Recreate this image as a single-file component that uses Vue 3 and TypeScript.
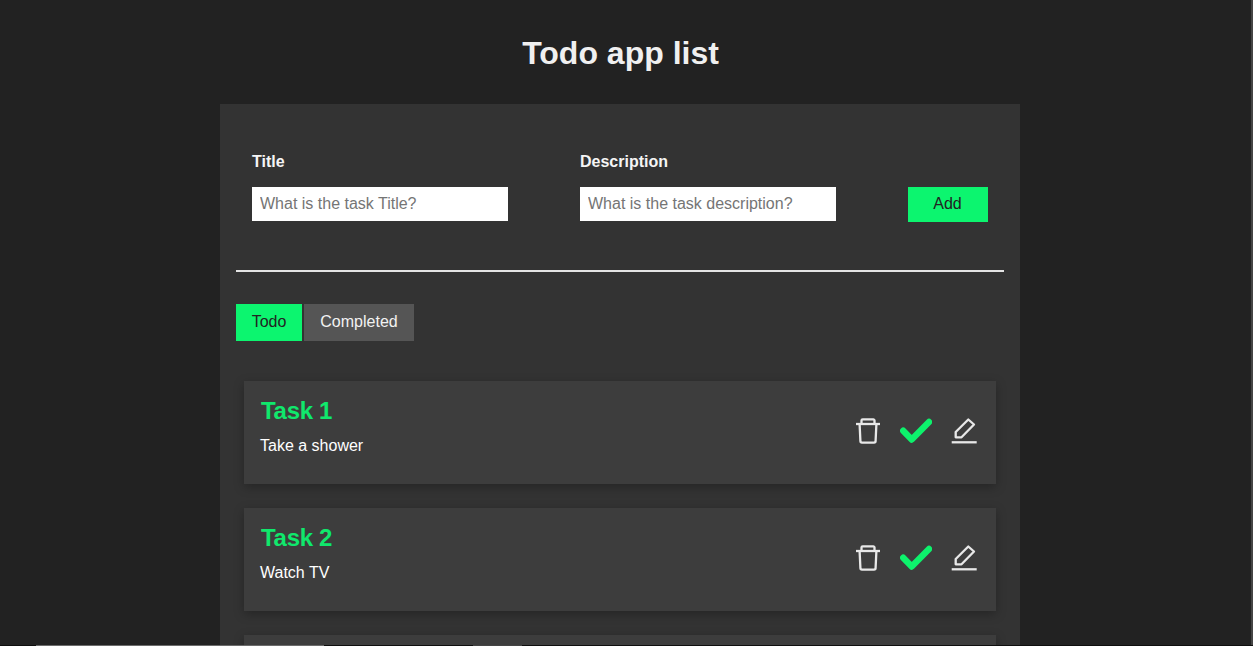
<script setup lang="ts">
interface Task {
  title: string
  description: string
}

const tasks: Task[] = [
  { title: 'Task 1', description: 'Take a shower' },
  { title: 'Task 2', description: 'Watch TV' },
]
</script>

<template>
  <div class="page">
    <header class="header">
      <h1>Todo app list</h1>
    </header>

    <main class="wrapper">
      <form class="form" @submit.prevent>
        <div class="field">
          <label for="title">Title</label>
          <input id="title" type="text" placeholder="What is the task Title?" />
        </div>
        <div class="field">
          <label for="description">Description</label>
          <input id="description" type="text" placeholder="What is the task description?" />
        </div>
        <button type="submit" class="add">Add</button>
      </form>

      <div class="tabs">
        <button type="button" class="tab active">Todo</button>
        <button type="button" class="tab">Completed</button>
      </div>

      <ul class="list">
        <li v-for="task in tasks" :key="task.title" class="card">
          <div class="text">
            <h3>{{ task.title }}</h3>
            <p>{{ task.description }}</p>
          </div>
          <div class="icons">
            <svg viewBox="0 0 32 32" fill="none" stroke="#e8e8e8" stroke-width="2.3">
              <path d="M4 9H28" />
              <path d="M9.5 9V5.6a1.2 1.2 0 0 1 1.2-1.2H21.3a1.2 1.2 0 0 1 1.2 1.2V9" />
              <path d="M7.6 9L8.4 26a1.6 1.6 0 0 0 1.6 1.6H22a1.6 1.6 0 0 0 1.6-1.6L24.4 9" />
            </svg>
            <svg viewBox="0 0 32 32" fill="none" stroke="#0df26c" stroke-width="6.4" stroke-linecap="round" stroke-linejoin="round">
              <path d="M3.2 15.7L11.7 24.5L29 7" />
            </svg>
            <svg viewBox="0 0 32 32" fill="none" stroke="#e8e8e8" stroke-width="2.3">
              <path d="M3.7 27.3H28.7" />
              <path d="M7.7 22.3V17L20.3 4.5L26 9.5L13.5 22.3Z" stroke-linejoin="round" />
            </svg>
          </div>
        </li>
        <li class="card"></li>
      </ul>
    </main>

    <div class="edge-right"></div>
    <div class="edge-bottom">
      <span class="seg black s1"></span>
      <span class="seg thumb s2"></span>
      <span class="seg black s3"></span>
      <span class="seg dim s4"></span>
      <span class="seg black s5"></span>
    </div>
  </div>
</template>

<style>
html,
body {
  margin: 0;
  height: 100%;
  overflow: hidden;
  background: #222222;
}
</style>

<style scoped>
.page {
  box-sizing: border-box;
  height: 646px;
  padding-right: 13px;
  background: #222222;
  font-family: 'Liberation Sans', Arial, sans-serif;
  color: #fff;
  overflow: hidden;
  position: relative;
}

.header {
  height: 104px;
  display: flex;
  align-items: center;
  justify-content: center;
}

h1 {
  margin: 2px 0 0 1px;
  font-size: 32px;
  line-height: 37px;
  font-weight: 700;
  color: #f0f0f0;
}

.wrapper {
  box-sizing: border-box;
  width: 800px;
  margin: 0 auto;
  padding: 0 16px;
  background: #333333;
}

.form {
  display: flex;
  align-items: flex-end;
  gap: 72px;
  padding: 49px 16px 49px;
  border-bottom: 2px solid #e4e4e4;
}

.field {
  display: flex;
  flex-direction: column;
}

.field label {
  font-size: 16px;
  line-height: 18px;
  font-weight: 700;
  margin-bottom: 16px;
  color: #f5f5f5;
}

.field input {
  box-sizing: border-box;
  width: 256px;
  height: 34px;
  border: 0;
  padding: 0 8px;
  background: #fff;
  outline: none;
  font-family: inherit;
  font-size: 16px;
}

.field input::placeholder {
  color: #757575;
}

.add {
  width: 80px;
  height: 35px;
  margin-bottom: -1px;
  border: 0;
  padding: 0 1px 1px 0;
  background: #0cf56f;
  color: #222;
  font-family: inherit;
  font-size: 16px;
}

.tabs {
  display: flex;
  gap: 2px;
  margin-top: 32px;
}

.tab {
  height: 37px;
  border: 0;
  padding: 0 0 2px;
  width: 110px;
  background: #555555;
  color: #f2f2f2;
  font-family: inherit;
  font-size: 16px;
}

.tab.active {
  width: 66px;
  background: #0cf56f;
  color: #222;
}

.list {
  list-style: none;
  margin: 40px 8px 0;
  padding: 0;
  display: flex;
  flex-direction: column;
  gap: 24px;
}

.card {
  box-sizing: border-box;
  height: 103px;
  display: flex;
  justify-content: space-between;
  align-items: flex-start;
  padding: 16px 16px 0;
  background: #3d3d3d;
  box-shadow: 0 3px 10px rgba(0, 0, 0, 0.28);
}

.text h3 {
  margin: 0 0 9px 1px;
  font-size: 24px;
  line-height: 28px;
  font-weight: 700;
  letter-spacing: -0.3px;
  color: #10e86c;
}

.text p {
  margin: 0;
  font-size: 16px;
  line-height: 24px;
  color: #fff;
}

.icons {
  display: flex;
  gap: 16px;
  margin-top: 18px;
}

.icons svg {
  width: 32px;
  height: 32px;
  display: block;
}

.edge-right {
  position: absolute;
  top: 0;
  right: 0;
  width: 2px;
  height: 645px;
  background: #454545;
}

.edge-bottom {
  position: absolute;
  left: 0;
  right: 0;
  bottom: 0;
  height: 1px;
  display: flex;
}

.seg {
  display: block;
  height: 1px;
}

.black {
  background: #0f0f0f;
}

.thumb {
  background: #6b6b6b;
}

.dim {
  background: #444444;
}

.s1 {
  width: 36px;
}

.s2 {
  width: 288px;
}

.s3 {
  width: 149px;
}

.s4 {
  width: 49px;
}

.s5 {
  flex: 1;
}
</style>
